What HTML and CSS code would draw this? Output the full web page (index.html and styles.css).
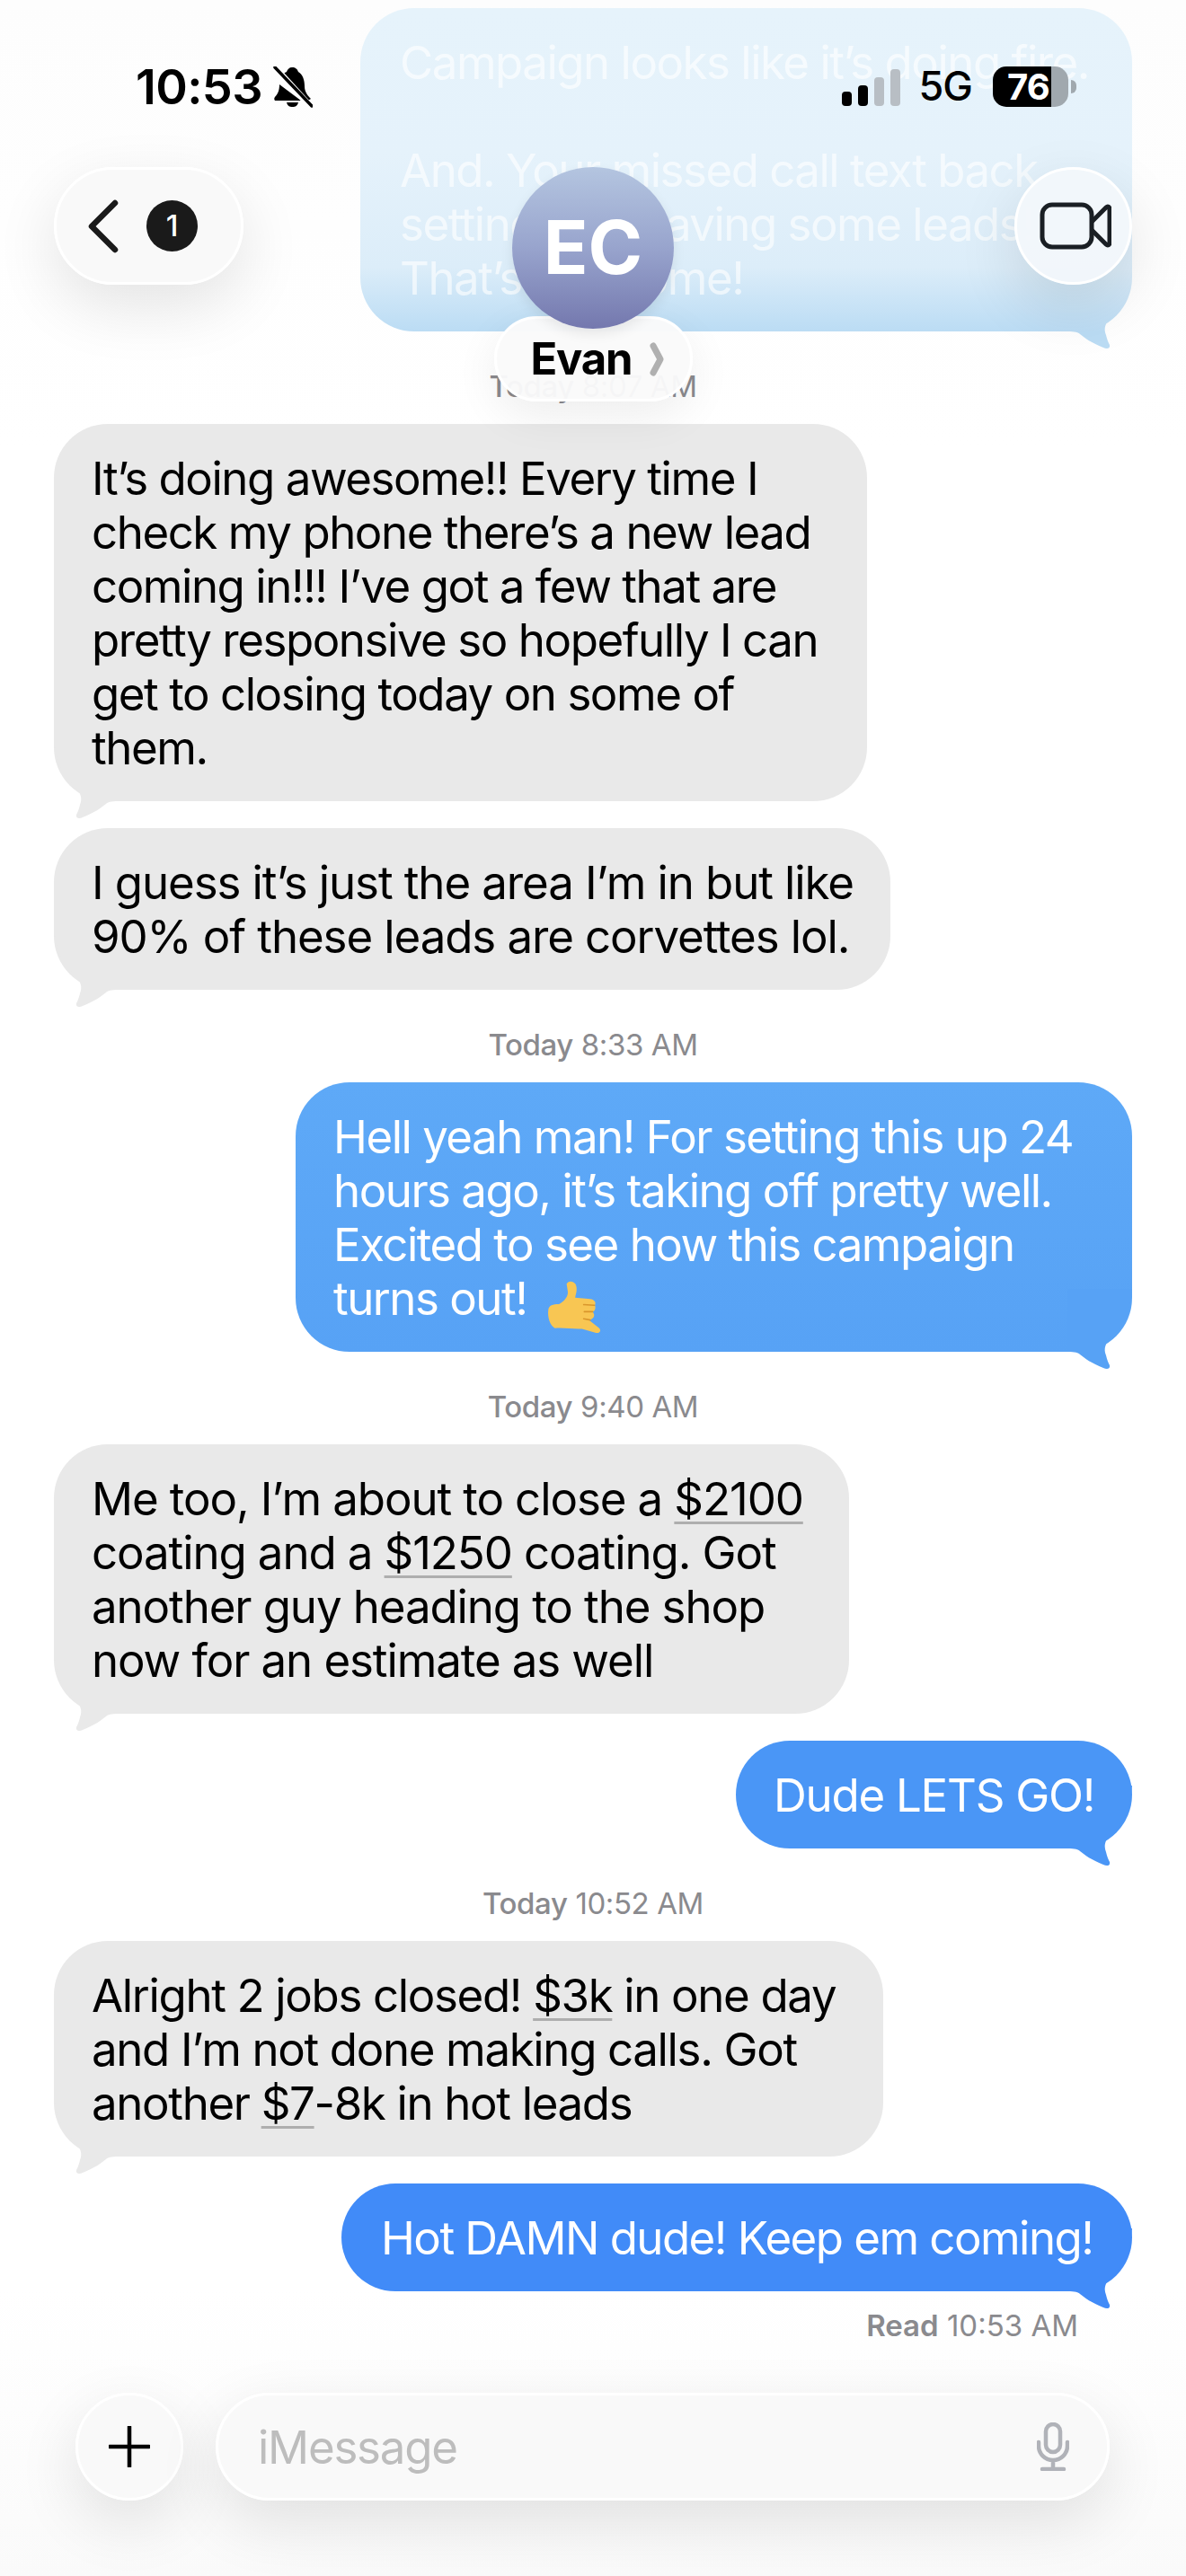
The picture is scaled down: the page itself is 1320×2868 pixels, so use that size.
FILE: index.html
```html
<!DOCTYPE html>
<html lang="en">
<head>
<meta charset="utf-8">
<title>Evan</title>
<link rel="stylesheet" href="styles.css">
</head>
<body>
<div class="screen">
  <main class="thread">
    <div class="bubble out top-bubble">Campaign looks like it’s doing fire.<br><br>And. Your missed call text back<br>setting was saving some leads!<br>That’s awesome!</div>
    <div class="stamp"><b>Today</b> 8:07 AM</div>
    <div class="bubble in gray-a">It’s doing awesome!! Every time I<br>check my phone there’s a new lead<br>coming in!!! I’ve got a few that are<br>pretty responsive so hopefully I can<br>get to closing today on some of<br>them.</div>
    <div class="bubble in next gray-b">I guess it’s just the area I’m in but like<br>90% of these leads are corvettes lol.</div>
    <div class="stamp"><b>Today</b> 8:33 AM</div>
    <div class="bubble out blue-a">Hell yeah man! For setting this up 24<br>hours ago, it’s taking off pretty well.<br>Excited to see how this campaign<br>turns out!
      <svg class="emoji" viewBox="50 44 190 186" aria-hidden="true">
        <path fill="#f8c653" d="M118 58C122 46 140 46 148 58C156 74 150 90 147 104L190 108C210 108 220 118 214 130C218 140 214 150 206 152C214 160 214 172 200 178L196 182L225 205C238 214 232 226 218 224L170 210C140 212 110 205 78 208C62 200 52 170 56 145C58 130 70 126 92 126C110 118 124 100 122 84Z"/>
        <path fill="none" stroke="#d9962c" stroke-width="5" stroke-linecap="round" d="M176 128L212 130M178 152L206 152M176 176L198 180"/>
      </svg>
    </div>
    <div class="stamp"><b>Today</b> 9:40 AM</div>
    <div class="bubble in gray-c">Me too, I’m about to close a <span class="detected">$2100</span><br>coating and a <span class="detected">$1250</span> coating. Got<br>another guy heading to the shop<br>now for an estimate as well</div>
    <div class="bubble out next blue-b">Dude LETS GO!</div>
    <div class="stamp"><b>Today</b> 10:52 AM</div>
    <div class="bubble in gray-d">Alright 2 jobs closed! <span class="detected">$3k</span> in one day<br>and I’m not done making calls. Got<br>another <span class="detected">$7</span>-8k in hot leads</div>
    <div class="bubble out next blue-c">Hot DAMN dude! Keep em coming!</div>
    <div class="read"><b>Read</b> 10:53 AM</div>
  </main>

  <header class="header">
    <div class="status">
      <div class="status-left">
        <span class="clock">10:53</span>
        <svg class="bell" viewBox="0 0 44 46" aria-hidden="true">
          <path fill="#000" d="M21 1C25 1 27 3 28 6C33 9 35 15 35 22C35 28 38 32 42 36L37 39L9 13C10 10 12 7 15 6C16 3 18 1 21 1ZM7 20L31 38H2C1 37 1 35 2 34C5 31 7 27 7 20ZM15 40H28C27 44 25 45 21.500 45C18 45 16 44 15 40Z"/>
          <path fill="none" stroke="#fff" stroke-width="7" d="M1 0L42 45"/>
          <path fill="none" stroke="#000" stroke-width="3.500" stroke-linecap="round" d="M2 1L43 44"/>
        </svg>
      </div>
      <div class="status-right">
        <svg class="signal" viewBox="0 0 65 41" aria-hidden="true">
          <rect class="bar-on" x="0" y="25" width="11" height="16" rx="4"/>
          <rect class="bar-on" x="18" y="18" width="11" height="23" rx="4"/>
          <rect class="bar-off" x="36" y="9" width="11" height="32" rx="4"/>
          <rect class="bar-off" x="54" y="0" width="11" height="41" rx="4"/>
        </svg>
        <span class="network">5G</span>
        <span class="battery">76</span>
      </div>
    </div>
    <nav class="nav">
      <button class="glass back" type="button" aria-label="Back">
        <svg class="chevron" viewBox="0 0 40 64" aria-hidden="true"><path d="M33 6L7 32L33 58"/></svg>
        <span class="count">1</span>
      </button>
      <div class="contact">
        <div class="avatar">EC</div>
        <div class="name-pill"><span>Evan</span>
          <svg class="name-chevron" viewBox="0 0 16 38" aria-hidden="true"><path d="M4 4L12 19L4 34"/></svg>
        </div>
      </div>
      <button class="glass video" type="button" aria-label="FaceTime">
        <svg class="video-icon" viewBox="0 0 80 54" aria-hidden="true">
          <rect x="3" y="3" width="55" height="47" rx="11"/>
          <path d="M58 22L74 6C76 4 78 5 78 8V45C78 48 76 49 74 47L58 31"/>
        </svg>
      </button>
    </nav>
  </header>

  <footer class="composer">
    <button class="glass plus" type="button" aria-label="Add">
      <svg viewBox="0 0 46 46" class="plus-icon" aria-hidden="true"><path d="M23 1V45M1 23H45"/></svg>
    </button>
    <div class="glass field">
      <span class="placeholder">iMessage</span>
      <svg class="mic" viewBox="0 0 36 54" aria-hidden="true">
        <rect x="10" y="2" width="16" height="31" rx="8"/>
        <path d="M2 22V26C2 35 9 42 18 42C27 42 34 35 34 26V22M18 42V51M6 52H30"/>
      </svg>
    </div>
  </footer>
</div>
</body>
</html>
```

FILE: styles.css
```css
* { box-sizing: border-box; }

html, body { margin: 0; padding: 0; }

body {
  background: #fff;
  font-family: Inter, "Liberation Sans", sans-serif;
  color: #000;
}

.screen {
  position: relative;
  width: 1320px;
  height: 2868px;
  overflow: hidden;
  background: linear-gradient(180deg, #fdfdfd 0, #fff 500px, #fff 2550px, #fafafa 2868px);
}

/* Message thread */
.thread {
  display: flex;
  flex-direction: column;
  padding: 9px 60px 0;
}

.bubble {
  position: relative;
  isolation: isolate;
  padding: 31px 0 29px 42px;
  border-radius: 60px;
  font-size: 51px;
  line-height: 60px;
  letter-spacing: -1.25px;
  white-space: nowrap;
}

.bubble::after {
  content: "";
  position: absolute;
  z-index: -1;
  bottom: -22px;
  width: 72px;
  height: 92px;
  background: var(--tail);
  clip-path: path("M0,0 C2,25 8,40 22,52 C30,60 32,67 29,74 C28,79 26,83 25,85 C24,89 28,90 32,88 C45,83 53,77 58,73 C60,71 63,70 72,70 L72,0 Z");
}

.in {
  --tail: #e9e9e9;
  background: #e9e9e9;
  align-self: flex-start;
}

.in::after { left: 0; }

.out {
  align-self: flex-end;
  color: #fff;
}

.out::after {
  right: 0;
  transform: scaleX(-1);
}

.next { margin-top: 30px; }

.gray-a { width: 905px; letter-spacing: -1.45px; }
.gray-b { width: 931px; letter-spacing: -1.1px; }
.gray-c { width: 885px; letter-spacing: -1.1px; }
.gray-d { width: 923px; letter-spacing: -1.35px; }

.top-bubble {
  --tail: linear-gradient(180deg, #dcedf9 0, #bbdcf4 70px);
  width: 859px;
  padding-left: 44px;
  letter-spacing: -1.5px;
  color: rgba(255, 255, 255, 0.62);
  background: linear-gradient(180deg, #e6f3fb 0, #e5f2fb 45%, #dcedf9 80%, #bbdcf4 100%);
}

.blue-a {
  --tail: #57a2f5;
  width: 931px;
  height: 300px;
  letter-spacing: -1.5px;
  background: linear-gradient(180deg, #5ea9f7, #57a2f5);
}

.blue-b {
  --tail: #4a96f6;
  width: 441px;
  background: #4a96f6;
}

.blue-c {
  --tail: #418bf8;
  width: 880px;
  padding-left: 44px;
  letter-spacing: -1.55px;
  background: #418bf8;
}

.emoji {
  display: inline-block;
  width: 65px;
  height: 61px;
  margin: -8px 0 -8px 8px;
  vertical-align: -14px;
}

.detected {
  text-decoration: underline #aeaeae 3px;
  text-underline-offset: 7px;
  text-decoration-skip-ink: none;
}

.stamp, .read {
  height: 42px;
  font-size: 33px;
  line-height: 42px;
  letter-spacing: -0.4px;
  color: #8a8a8e;
  white-space: nowrap;
}

.stamp {
  margin: 40px 0 21px;
  text-align: center;
}

.stamp b { font-weight: 500; }
.read b { font-weight: 600; }

.read {
  margin: 17px 60px 0 0;
  text-align: right;
  letter-spacing: 0;
}

/* Shared floating-glass surface */
.glass {
  border: 3px solid #fff;
  background: rgba(249, 249, 249, 0.95);
  box-shadow: 0 24px 70px rgba(0, 0, 0, 0.11);
  padding: 0;
}

/* Header overlay */
.header {
  position: absolute;
  top: 0;
  left: 0;
  right: 0;
}

.status {
  display: flex;
  justify-content: space-between;
  align-items: flex-start;
  height: 186px;
  padding: 72px 131px 0 151px;
}

.status-left {
  display: flex;
  align-items: center;
  gap: 12px;
  height: 50px;
}

.clock {
  font-size: 54px;
  line-height: 50px;
  font-weight: 600;
  letter-spacing: -0.6px;
}

.bell { width: 44px; height: 46px; }

.status-right {
  display: flex;
  align-items: center;
  height: 50px;
  margin-top: -1px;
}

.signal { width: 65px; height: 41px; margin-top: 2px; }
.bar-on { fill: #000; }
.bar-off { fill: #b8bec4; }

.network {
  margin-left: 21px;
  font-size: 45px;
  line-height: 50px;
  font-weight: 500;
  letter-spacing: -1px;
}

.battery {
  position: relative;
  width: 84px;
  height: 45px;
  margin-left: 23px;
  padding-left: 16px;
  border-radius: 15px;
  background: linear-gradient(90deg, #000 65px, #a0a8ae 65px);
  color: #fff;
  font-size: 40px;
  line-height: 45px;
  font-weight: 700;
  letter-spacing: -0.8px;
}

.battery::after {
  content: "";
  position: absolute;
  right: -9px;
  top: 15px;
  width: 6px;
  height: 15px;
  border-radius: 0 6px 6px 0;
  background: #a0a8ae;
}

.nav {
  display: grid;
  grid-template-columns: 1fr auto 1fr;
  align-items: start;
  padding: 0 60px;
}

.back {
  justify-self: start;
  display: flex;
  align-items: center;
  gap: 32px;
  width: 211px;
  height: 131px;
  padding-left: 32px;
  border-radius: 66px;
}

.chevron { width: 40px; height: 64px; margin-right: -4px; flex: none; }

.chevron path {
  fill: none;
  stroke: #1a1a1a;
  stroke-width: 6.500;
  stroke-linecap: round;
  stroke-linejoin: round;
}

.count {
  flex: none;
  width: 57px;
  height: 57px;
  border-radius: 50%;
  background: #1a1a1a;
  color: #fff;
  font-family: Inter, sans-serif;
  font-size: 33px;
  line-height: 57px;
  font-weight: 500;
  text-align: center;
}

.contact {
  display: flex;
  flex-direction: column;
  align-items: center;
}

.avatar {
  position: relative;
  z-index: 1;
  width: 180px;
  height: 180px;
  border-radius: 50%;
  background: linear-gradient(180deg, #b4c5e0 0, #98a4cd 50%, #7478ae 100%);
  box-shadow: 0 6px 14px rgba(0, 0, 0, 0.08);
  color: #fff;
  font-size: 82px;
  line-height: 180px;
  font-weight: 700;
  letter-spacing: 0;
  text-align: center;
}

.name-pill {
  display: flex;
  align-items: center;
  gap: 20px;
  width: 221px;
  height: 95px;
  margin-top: -14px;
  padding: 0 0 0 38px;
  border: 3px solid #fff;
  border-radius: 48px;
  background: rgba(250, 250, 250, 0.96);
  box-shadow: 0 16px 50px rgba(0, 0, 0, 0.07);
  font-size: 49px;
  font-weight: 700;
  letter-spacing: -1.2px;
}

.name-chevron { width: 16px; height: 38px; flex: none; }

.name-chevron path {
  fill: none;
  stroke: #b0b0b0;
  stroke-width: 7;
  stroke-linecap: round;
  stroke-linejoin: round;
}

.video {
  justify-self: end;
  display: flex;
  align-items: center;
  justify-content: center;
  width: 131px;
  height: 131px;
  border-radius: 50%;
  background: rgba(242, 247, 251, 0.95);
}

.video-icon { width: 80px; height: 54px; margin-left: 4px; }

.video-icon rect, .video-icon path {
  fill: none;
  stroke: #1a1f24;
  stroke-width: 5;
  stroke-linejoin: round;
}

/* Composer overlay */
.composer {
  position: absolute;
  left: 84px;
  right: 85px;
  bottom: 84px;
  display: flex;
  gap: 36px;
}

.plus {
  display: flex;
  align-items: center;
  justify-content: center;
  flex: none;
  width: 120px;
  height: 120px;
  border-radius: 50%;
}

.plus-icon { width: 46px; height: 46px; }

.plus-icon path {
  fill: none;
  stroke: #000;
  stroke-width: 4.500;
  stroke-linecap: round;
}

.field {
  flex: 1;
  display: flex;
  align-items: center;
  justify-content: space-between;
  height: 120px;
  padding: 0 42px 0 44px;
  border-radius: 60px;
}

.placeholder {
  color: #bdbdbd;
  font-size: 51px;
  letter-spacing: -1.25px;
}

.mic { width: 36px; height: 54px; }

.mic rect, .mic path {
  fill: none;
  stroke: #b0b2b8;
  stroke-width: 4.500;
  stroke-linecap: round;
}
```
